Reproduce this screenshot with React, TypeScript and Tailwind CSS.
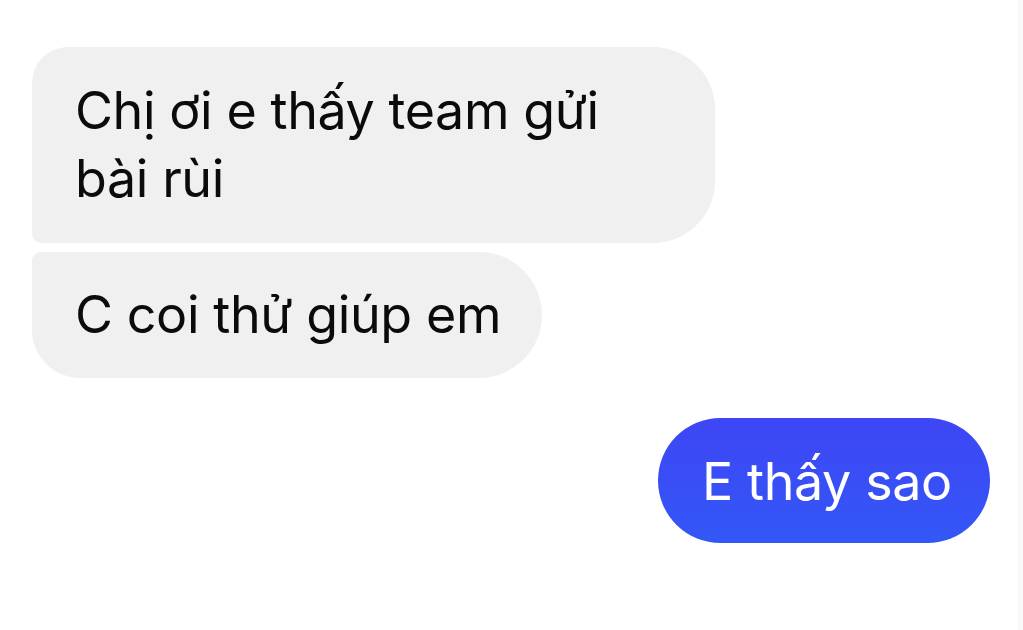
export default function App() {
  return (
    <div className="flex h-[630px] w-[1023px] overflow-hidden bg-white font-['Inter','Noto_Sans',sans-serif]">
      <main className="flex flex-1 flex-col items-start pl-[32px] pr-[28px] pt-[47px]">
        <div className="w-[683px] rounded-tl-[36px] rounded-tr-[62px] rounded-br-[62px] rounded-bl-[9px] bg-[#f0f0f0] pl-[43px] pt-[30px] pb-[30px] text-[52px] leading-[68px] tracking-[-0.4px] text-[#0b0b0b]">
          Chị ơi e thấy team gửi
          <br />
          bài rùi
        </div>
        <div className="mt-[9px] w-[510px] rounded-tl-[9px] rounded-tr-[63px] rounded-br-[63px] rounded-bl-[48px] bg-[#f0f0f0] pl-[43px] pt-[29px] pb-[29px] text-[52px] leading-[68px] tracking-[-0.4px] text-[#0b0b0b]">
          C coi thử giúp em
        </div>
        <div className="mt-[40px] w-[332px] self-end rounded-full bg-[linear-gradient(180deg,#3e46f5_0%,#3357f7_100%)] pl-[44px] pt-[30px] pb-[27px] text-[52px] leading-[68px] tracking-[-0.4px] text-white">
          E thấy sao
        </div>
      </main>
      <aside className="w-[5px] bg-[#f9f9f9]" />
    </div>
  );
}
